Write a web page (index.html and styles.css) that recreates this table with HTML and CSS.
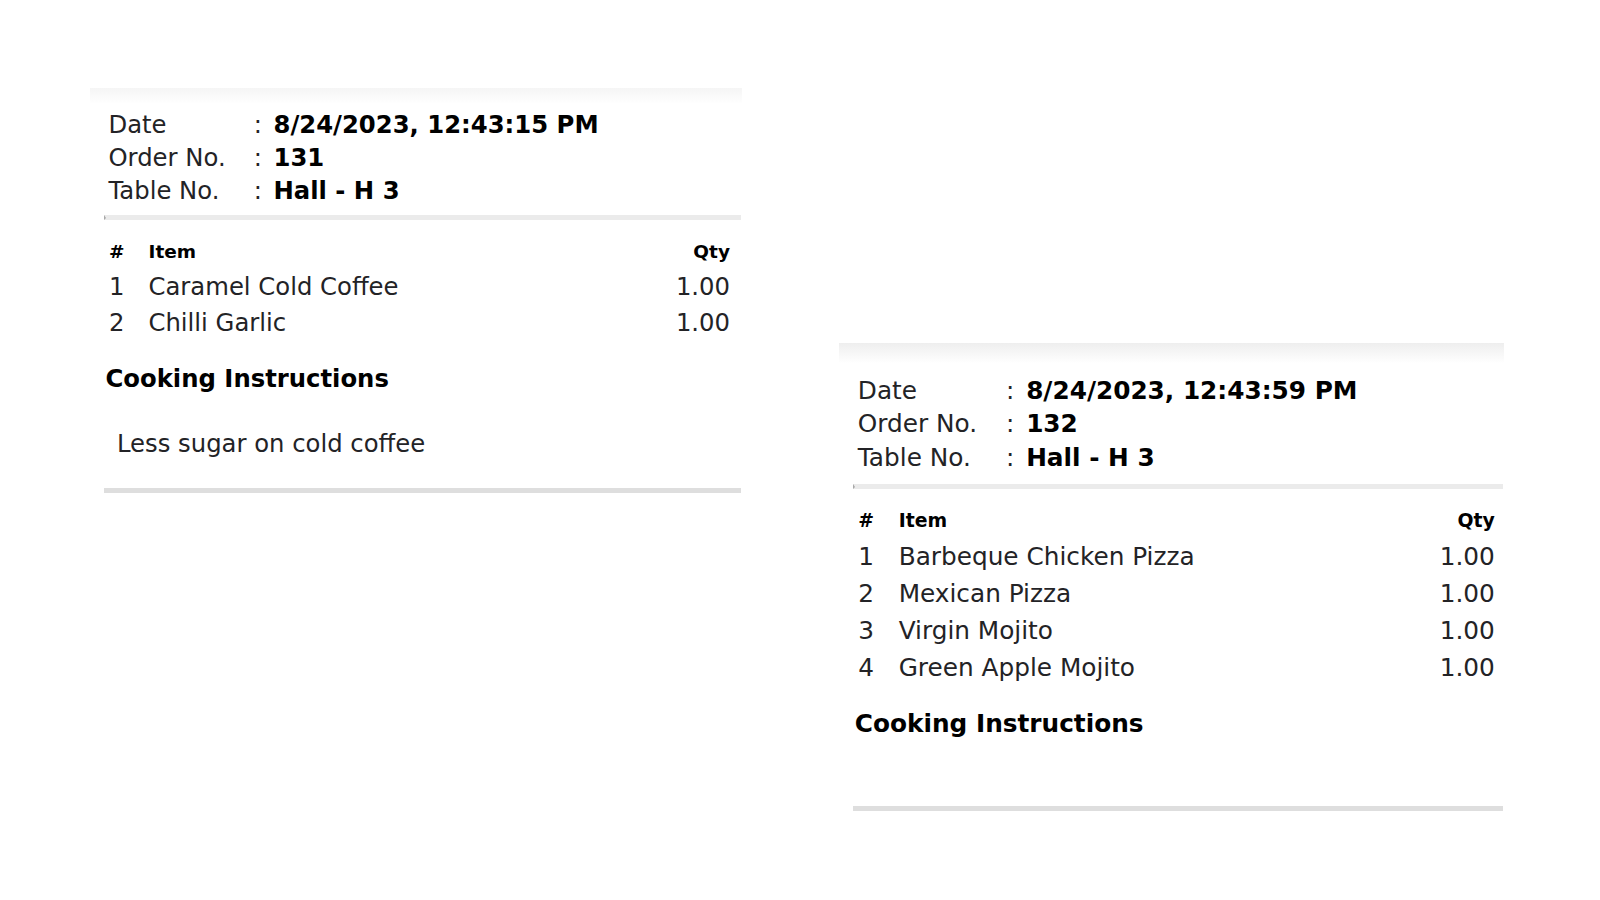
FILE: index.html
```html
<!DOCTYPE html>
<html lang="en">
<head>
<meta charset="utf-8">
<title>KOT Tickets</title>
<link rel="stylesheet" href="styles.css">
</head>
<body>
<main class="board">
  <section class="ticket ticket--a">
    <div class="info">
      <div class="info-row"><span class="info-label">Date</span><span class="info-colon">:</span><span class="info-value">8/24/2023, 12:43:15 PM</span></div>
      <div class="info-row"><span class="info-label">Order No.</span><span class="info-colon">:</span><span class="info-value">131</span></div>
      <div class="info-row"><span class="info-label">Table No.</span><span class="info-colon">:</span><span class="info-value">Hall - H 3</span></div>
    </div>
    <hr class="divider">
    <table class="items">
      <thead>
        <tr><th class="col-no">#</th><th class="col-item">Item</th><th class="col-qty">Qty</th></tr>
      </thead>
      <tbody>
        <tr><td class="col-no">1</td><td class="col-item">Caramel Cold Coffee</td><td class="col-qty">1.00</td></tr>
        <tr><td class="col-no">2</td><td class="col-item">Chilli Garlic</td><td class="col-qty">1.00</td></tr>
      </tbody>
    </table>
    <h3 class="instr-title">Cooking Instructions</h3>
    <p class="instr-text">Less sugar on cold coffee</p>
    <div class="endline"></div>
  </section>

  <section class="ticket ticket--b">
    <div class="info">
      <div class="info-row"><span class="info-label">Date</span><span class="info-colon">:</span><span class="info-value">8/24/2023, 12:43:59 PM</span></div>
      <div class="info-row"><span class="info-label">Order No.</span><span class="info-colon">:</span><span class="info-value">132</span></div>
      <div class="info-row"><span class="info-label">Table No.</span><span class="info-colon">:</span><span class="info-value">Hall - H 3</span></div>
    </div>
    <hr class="divider">
    <table class="items">
      <thead>
        <tr><th class="col-no">#</th><th class="col-item">Item</th><th class="col-qty">Qty</th></tr>
      </thead>
      <tbody>
        <tr><td class="col-no">1</td><td class="col-item">Barbeque Chicken Pizza</td><td class="col-qty">1.00</td></tr>
        <tr><td class="col-no">2</td><td class="col-item">Mexican Pizza</td><td class="col-qty">1.00</td></tr>
        <tr><td class="col-no">3</td><td class="col-item">Virgin Mojito</td><td class="col-qty">1.00</td></tr>
        <tr><td class="col-no">4</td><td class="col-item">Green Apple Mojito</td><td class="col-qty">1.00</td></tr>
      </tbody>
    </table>
    <h3 class="instr-title">Cooking Instructions</h3>
    <p class="instr-text"></p>
    <div class="endline"></div>
  </section>
</main>
</body>
</html>
```

FILE: styles.css
```css
html, body {
  margin: 0;
  padding: 0;
  background: #ffffff;
}

body {
  font-family: "DejaVu Sans", "Noto Sans", sans-serif;
  color: #232326;
  width: 1600px;
  height: 900px;
  overflow: hidden;
}

.board {
  display: flex;
  align-items: flex-start;
  gap: 97px;
  padding-left: 90px;
}

.ticket {
  width: 652px;
  box-sizing: border-box;
  padding: 19.5px 1px 0 14px;
  background: linear-gradient(#f5f5f5, #ffffff 16px);
}

.ticket--a {
  margin-top: 88px;
}

.ticket--b {
  zoom: 1.02;
  margin-top: 336px;
  padding-top: 30.5px;
  background: linear-gradient(#eeeeee, #ffffff 20px);
}

.info {
  padding-left: 4.5px;
}

.info-row {
  display: grid;
  grid-template-columns: 145.3px 19.7px 1fr;
  font-size: 24.3px;
  line-height: 33px;
  white-space: nowrap;
}

.info-value {
  font-weight: bold;
  color: #000;
}

.divider {
  margin: 8px 0 0 0;
  height: 0;
  border: none;
  border-top: 3px solid #ebebeb;
  border-bottom: 2px solid #ebebeb;
  border-left: 2px solid #a8a8a8;
}

.ticket--b .divider {
  margin-top: 9px;
}

.items {
  margin: 14px 11px 0 5px;
  width: calc(100% - 16px);
  border-collapse: collapse;
  font-size: 24.3px;
}

.ticket--b .items {
  margin-top: 13px;
  width: calc(100% - 13px);
}

.items th,
.items td {
  padding: 0;
  height: 35.5px;
  line-height: 35.5px;
  text-align: left;
  white-space: nowrap;
}

.ticket--b .items th,
.ticket--b .items td {
  height: 36.2px;
  line-height: 36.2px;
}

.items th {
  font-size: 18.5px;
  font-weight: bold;
  color: #000;
}

.items .col-no {
  width: 39.5px;
}

.items .col-qty {
  text-align: right;
}

.instr-title {
  margin: 24px 0 0 1.5px;
  font-size: 24.3px;
  line-height: 30px;
  font-weight: bold;
  color: #000;
}

.ticket--b .instr-title {
  margin-top: 22px;
}

.instr-text {
  margin: 0;
  padding: 35.5px 0 30.5px 13px;
  font-size: 24.3px;
  line-height: 28px;
}

.ticket--b .instr-text {
  padding-top: 36.5px;
  padding-bottom: 28px;
}

.endline {
  height: 5px;
  background: #dedede;
}
```
